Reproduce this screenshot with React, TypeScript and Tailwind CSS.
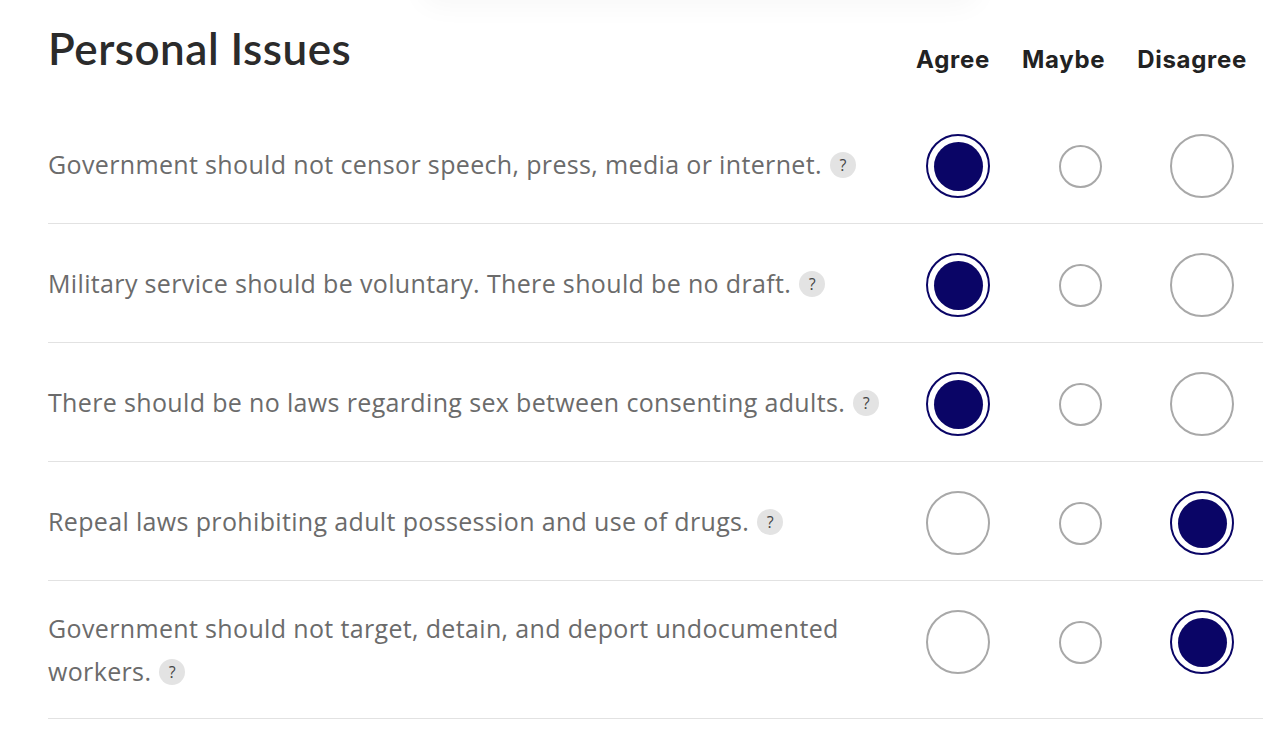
import React, { useState } from "react";

type Answer = "agree" | "maybe" | "disagree";

const questions: { text: string; answer: Answer }[] = [
  { text: "Government should not censor speech, press, media or internet.", answer: "agree" },
  { text: "Military service should be voluntary. There should be no draft.", answer: "agree" },
  { text: "There should be no laws regarding sex between consenting adults.", answer: "agree" },
  { text: "Repeal laws prohibiting adult possession and use of drugs.", answer: "disagree" },
  { text: "Government should not target, detain, and deport undocumented workers.", answer: "disagree" },
];

const columns: Answer[] = ["agree", "maybe", "disagree"];

function Radio({ checked, small, onClick }: { checked: boolean; small?: boolean; onClick: () => void }) {
  if (checked) {
    return (
      <button
        onClick={onClick}
        className="flex h-16 w-16 items-center justify-center rounded-full border-2 border-[#0a0566] bg-white"
      >
        <span className="block h-[49px] w-[49px] rounded-full bg-[#0a0566]" />
      </button>
    );
  }
  return (
    <button
      onClick={onClick}
      className={
        small
          ? "h-[43px] w-[43px] rounded-full border-2 border-[#a8a8a8] bg-white"
          : "h-16 w-16 rounded-full border-2 border-[#a8a8a8] bg-white"
      }
    />
  );
}

function HelpBadge() {
  return (
    <span className="ml-2 inline-flex h-[26px] w-[26px] items-center justify-center rounded-full bg-[#e3e3e3] align-[3px] font-['Open_Sans',sans-serif] text-[16px] leading-none tracking-normal text-[#444]">
      ?
    </span>
  );
}

export default function App() {
  const [answers, setAnswers] = useState<Answer[]>(questions.map((q) => q.answer));

  const setAnswer = (i: number, a: Answer) => {
    const next = [...answers];
    next[i] = a;
    setAnswers(next);
  };

  return (
    <div className="relative min-h-[754px] w-[1280px] overflow-hidden bg-white">
      <div className="pointer-events-none absolute left-[420px] top-[-40px] h-10 w-[560px] rounded-full shadow-[0_6px_28px_rgba(0,0,0,0.035)]" />
      <div className="ml-12 mr-[17px] pt-[22px]">
        <div className="flex items-start justify-between">
          <h2 className="font-['Lato',sans-serif] text-[44px] font-semibold leading-[52px] tracking-[0.5px] text-[#2b2b2b]">
            Personal Issues
          </h2>
          <div className="mt-[20px] flex gap-8 pr-4 font-['Inter',sans-serif] text-[24px] font-bold tracking-[0.7px] text-[#222]">
            <span>Agree</span>
            <span>Maybe</span>
            <span>Disagree</span>
          </div>
        </div>

        <div className="mt-[27px]">
          {questions.map((q, i) => (
            <div key={i} className="flex items-center border-b border-[#e2e2e2] py-[26px]">
              <p className="w-[849px] font-['Open_Sans',sans-serif] text-[25px] leading-[42.5px] tracking-[0.35px] text-[#6b6b6b]">
                {q.text}
                <HelpBadge />
              </p>
              <div className="grid flex-1 grid-cols-3 self-start">
                {columns.map((c) => (
                  <div key={c} className="flex h-[66px] items-center justify-center pt-1">
                    <Radio
                      checked={answers[i] === c}
                      small={c === "maybe"}
                      onClick={() => setAnswer(i, c)}
                    />
                  </div>
                ))}
              </div>
            </div>
          ))}
        </div>
      </div>
    </div>
  );
}
